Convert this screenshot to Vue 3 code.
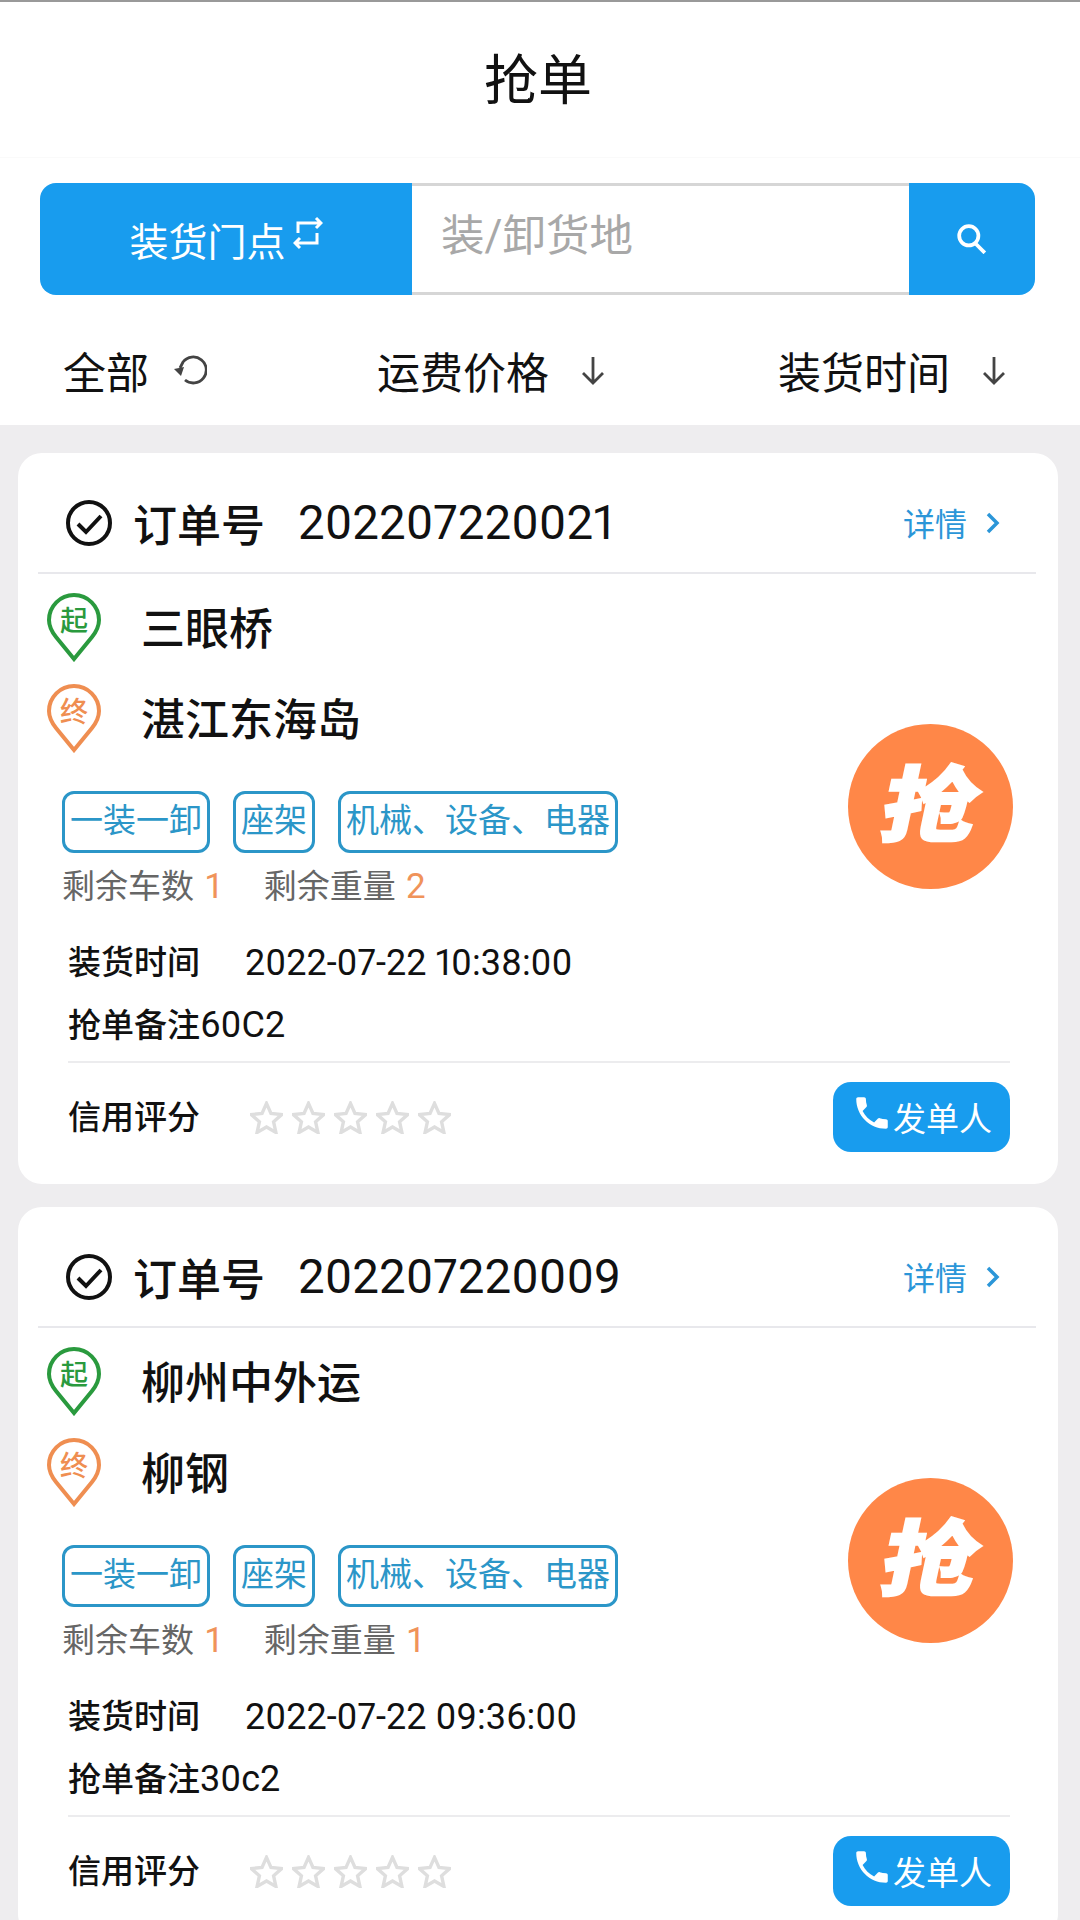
<template>
  <div class="page">
    <div class="title">抢单</div>

    <div class="search">
      <div class="search-type">
        <span>装货门点</span>
        <svg class="swap-icon" viewBox="0 0 30 34">
          <path d="M5 17V7h22M23 2l5 5-5 5" />
          <path d="M24 17v10H3M7 22l-5 5 5 5" />
        </svg>
      </div>
      <div class="search-input">装/卸货地</div>
      <div class="search-btn">
        <svg class="search-icon" viewBox="0 0 30 28">
          <circle cx="12" cy="11" r="9" />
          <path d="M18 18l9 9" />
        </svg>
      </div>
    </div>

    <div class="filters">
      <div class="filter">
        <span>全部</span>
        <svg class="filter-icon refresh" viewBox="0 0 36 36">
          <path d="M14 28A13 13 0 1 0 12 10L9 16" />
          <path class="solid" d="M3 17l10-2-3 9z" />
        </svg>
      </div>
      <div class="filter">
        <span>运费价格</span>
        <svg class="filter-icon" viewBox="0 0 36 36">
          <path d="M18 5v26M8 21l10 10 10-10" />
        </svg>
      </div>
      <div class="filter">
        <span>装货时间</span>
        <svg class="filter-icon" viewBox="0 0 36 36">
          <path d="M18 5v26M8 21l10 10 10-10" />
        </svg>
      </div>
    </div>

    <div class="list">
      <div v-for="order in orders" :key="order.no" class="card">
        <div class="card-head">
          <svg class="check-icon" viewBox="0 0 46 46">
            <circle cx="23" cy="23" r="21" />
            <path d="M12 24l8 8 15-16" />
          </svg>
          <span class="order-label">订单号</span>
          <span class="order-no">{{ order.no }}</span>
          <span class="detail">详情</span>
          <svg class="chevron" viewBox="0 0 14 22">
            <path d="M2 2l9 9-9 9" />
          </svg>
        </div>

        <div class="stops">
          <div class="stop">
            <svg class="pin pin-start" viewBox="0 0 54 69">
              <path d="M27 66L9 44C5 39 2 33 2 27a25 25 0 0 1 50 0c0 6-3 12-7 17z" />
              <text x="27" y="38">起</text>
            </svg>
            <span>{{ order.from }}</span>
          </div>
          <div class="stop">
            <svg class="pin pin-end" viewBox="0 0 54 69">
              <path d="M27 66L9 44C5 39 2 33 2 27a25 25 0 0 1 50 0c0 6-3 12-7 17z" />
              <text x="27" y="38">终</text>
            </svg>
            <span>{{ order.to }}</span>
          </div>
        </div>

        <div class="tags">
          <span v-for="tag in tags" :key="tag" class="tag">{{ tag }}</span>
        </div>

        <div class="stats">
          <span class="stat">剩余车数 <em>{{ order.cars }}</em></span>
          <span class="stat">剩余重量 <em>{{ order.weight }}</em></span>
        </div>

        <div class="time">
          <span>装货时间</span>
          <span class="num">{{ order.time }}</span>
        </div>
        <div class="remark">抢单备注<span class="num">{{ order.remark }}</span></div>

        <div class="card-foot">
          <span class="credit">信用评分</span>
          <div class="stars">
            <svg v-for="i in 5" :key="i" class="star" viewBox="0 0 34 33">
              <path d="M17 2l4.600 10.400 11 1.100-8.300 7.400 2.400 11L17 26.200 7.300 31.900l2.400-11L1.400 13.500l11-1.100z" />
            </svg>
          </div>
          <button class="call-btn">
            <svg class="phone-icon" viewBox="0 0 24 24">
              <path d="M6.620 10.790c1.440 2.830 3.760 5.140 6.590 6.590l2.200-2.200c.27-.27.67-.36 1.020-.24 1.120.37 2.330.57 3.570.57.55 0 1 .45 1 1V20c0 .55-.45 1-1 1-9.390 0-17-7.610-17-17 0-.55.45-1 1-1h3.500c.55 0 1 .45 1 1 0 1.250.2 2.450.57 3.570.11.35.03.74-.25 1.020l-2.200 2.200z" />
            </svg>
            <span>发单人</span>
          </button>
        </div>

        <div class="grab"><span>抢</span></div>
      </div>
    </div>
  </div>
</template>

<script setup>
const tags = ['一装一卸', '座架', '机械、设备、电器']

const orders = [
  {
    no: '202207220021',
    from: '三眼桥',
    to: '湛江东海岛',
    cars: 1,
    weight: 2,
    time: '2022-07-22 10:38:00',
    remark: '60C2'
  },
  {
    no: '202207220009',
    from: '柳州中外运',
    to: '柳钢',
    cars: 1,
    weight: 1,
    time: '2022-07-22 09:36:00',
    remark: '30c2'
  }
]
</script>

<style scoped>
.page {
  width: 1080px;
  height: 1920px;
  overflow: hidden;
  background: #eeedef;
  font-family: Roboto, "Noto Sans CJK SC", sans-serif;
  color: #111;
}

.title {
  height: 155px;
  padding-right: 4px;
  line-height: 159px;
  border-top: 2px solid #999;
  border-bottom: 1px solid #fafafa;
  background: #fff;
  text-align: center;
  font-size: 54px;
}

.search {
  display: flex;
  height: 112px;
  padding: 25px 45px 0 40px;
  background: #fff;
}

.search-type {
  display: flex;
  align-items: center;
  justify-content: center;
  gap: 7px;
  width: 372px;
  border-radius: 16px 0 0 16px;
  background: #189cee;
  color: #fff;
  font-size: 39px;
}

.swap-icon {
  width: 30px;
  height: 34px;
  margin-top: -12px;
  fill: none;
  stroke: #fff;
  stroke-width: 3;
}

.search-input {
  flex: 1;
  display: flex;
  align-items: center;
  padding: 0 0 14px 29px;
  border-top: 3px solid #d6d6d6;
  border-bottom: 3px solid #d6d6d6;
  color: #a8a8a8;
  font-size: 43.500px;
}

.search-btn {
  display: flex;
  align-items: center;
  justify-content: center;
  width: 126px;
  border-radius: 0 16px 16px 0;
  background: #189cee;
}

.search-icon {
  width: 32px;
  height: 30px;
  fill: none;
  stroke: #fff;
  stroke-width: 3.500;
}

.filters {
  display: grid;
  grid-template-columns: 314px 401px 1fr;
  align-items: center;
  height: 110px;
  padding: 20px 0 0 63px;
  background: #fff;
  font-size: 43px;
}

.filter {
  display: flex;
  align-items: center;
  gap: 26px;
}

.filter-icon {
  width: 36px;
  height: 36px;
  fill: none;
  stroke: #444;
  stroke-width: 2.800;
}

.filter-icon.refresh {
  margin-left: -4px;
}

.filter-icon .solid {
  fill: #444;
  stroke: none;
}

.list {
  display: flex;
  flex-direction: column;
  gap: 23px;
  padding: 28px 0 0 18px;
}

.card {
  position: relative;
  flex: none;
  width: 1040px;
  height: 731px;
  border-radius: 24px;
  background: #fff;
}

.card-head {
  display: flex;
  align-items: center;
  height: 121px;
  margin: 0 22px 0 20px;
  padding: 20px 36px 0 28px;
  box-sizing: border-box;
  border-bottom: 2px solid #e8e8ec;
}

.check-icon {
  width: 46px;
  height: 46px;
  fill: none;
  stroke: #111;
  stroke-width: 4;
}

.order-label {
  margin-left: 21px;
  font-size: 44px;
  font-weight: 500;
}

.order-no {
  flex: 1;
  margin-left: 33px;
  font-size: 47.500px;
  font-variant-numeric: proportional-nums;
}

.detail {
  margin-top: -2px;
  color: #2b96d8;
  font-size: 32px;
}

.chevron {
  width: 14px;
  height: 22px;
  margin-left: 19px;
  fill: none;
  stroke: #2b96d8;
  stroke-width: 3.500;
}

.stops {
  display: flex;
  flex-direction: column;
  gap: 22px;
  margin-top: 19px;
  padding-left: 29px;
}

.stop {
  display: flex;
  align-items: center;
  gap: 40px;
  font-size: 44px;
  font-weight: 500;
}

.stop span {
  padding-bottom: 4px;
}

.pin {
  width: 54px;
  height: 69px;
  fill: none;
  stroke-width: 4;
}

.pin text {
  stroke: none;
  font-size: 28px;
  font-weight: 500;
  text-anchor: middle;
}

.pin-start {
  stroke: #2a9a3e;
}

.pin-start text {
  fill: #2a9a3e;
}

.pin-end {
  stroke: #ef8e51;
}

.pin-end text {
  fill: #ef8e51;
}

.tags {
  display: flex;
  gap: 23px;
  margin: 38px 0 0 44px;
}

.tag {
  box-sizing: border-box;
  height: 62px;
  line-height: 54px;
  padding: 0 5px;
  border: 3px solid #2b96c8;
  border-radius: 12px;
  color: #2b96c8;
  font-size: 33px;
}

.stats {
  display: flex;
  gap: 40px;
  margin: 14px 0 0 44px;
  line-height: 40px;
  color: #666;
  font-size: 33px;
}

.stat em {
  margin-left: 2px;
  color: #f0935a;
  font-size: 35px;
  font-style: normal;
}

.time {
  display: flex;
  align-items: center;
  gap: 45px;
  margin: 36px 0 0 50px;
  line-height: 40px;
  font-size: 33px;
  font-weight: 500;
}

.num {
  font-size: 36px;
  font-weight: 400;
  font-variant-numeric: proportional-nums;
}

.remark {
  margin: 22px 0 0 50px;
  line-height: 40px;
  font-size: 33px;
  font-weight: 500;
}

.card-foot {
  display: flex;
  align-items: center;
  margin: 15px 48px 0 50px;
  padding-top: 19px;
  border-top: 2px solid #ececee;
}

.credit {
  padding-bottom: 4px;
  font-size: 33px;
  font-weight: 500;
}

.stars {
  display: flex;
  flex: 1;
  gap: 9px;
  margin-left: 50px;
}

.star {
  width: 33px;
  height: 33px;
  fill: none;
  stroke: #dedede;
  stroke-width: 3.500;
}

.call-btn {
  display: flex;
  align-items: center;
  justify-content: center;
  gap: 0;
  width: 177px;
  height: 70px;
  padding: 0;
  border: none;
  border-radius: 18px;
  background: #189cee;
  color: #fff;
  font-family: inherit;
  font-size: 33px;
}

.phone-icon {
  width: 42px;
  height: 42px;
  margin-top: -8px;
  fill: #fff;
}

.grab {
  position: absolute;
  top: 271px;
  right: 45px;
  display: flex;
  align-items: center;
  justify-content: center;
  width: 165px;
  height: 165px;
  border-radius: 50%;
  background: #ff8748;
  color: #fff;
  font-size: 96px;
  font-weight: 900;
}

.grab span {
  transform: skewX(-12deg) scale(1, 0.86);
  line-height: 1;
  -webkit-text-stroke: 2px #fff;
}
</style>
